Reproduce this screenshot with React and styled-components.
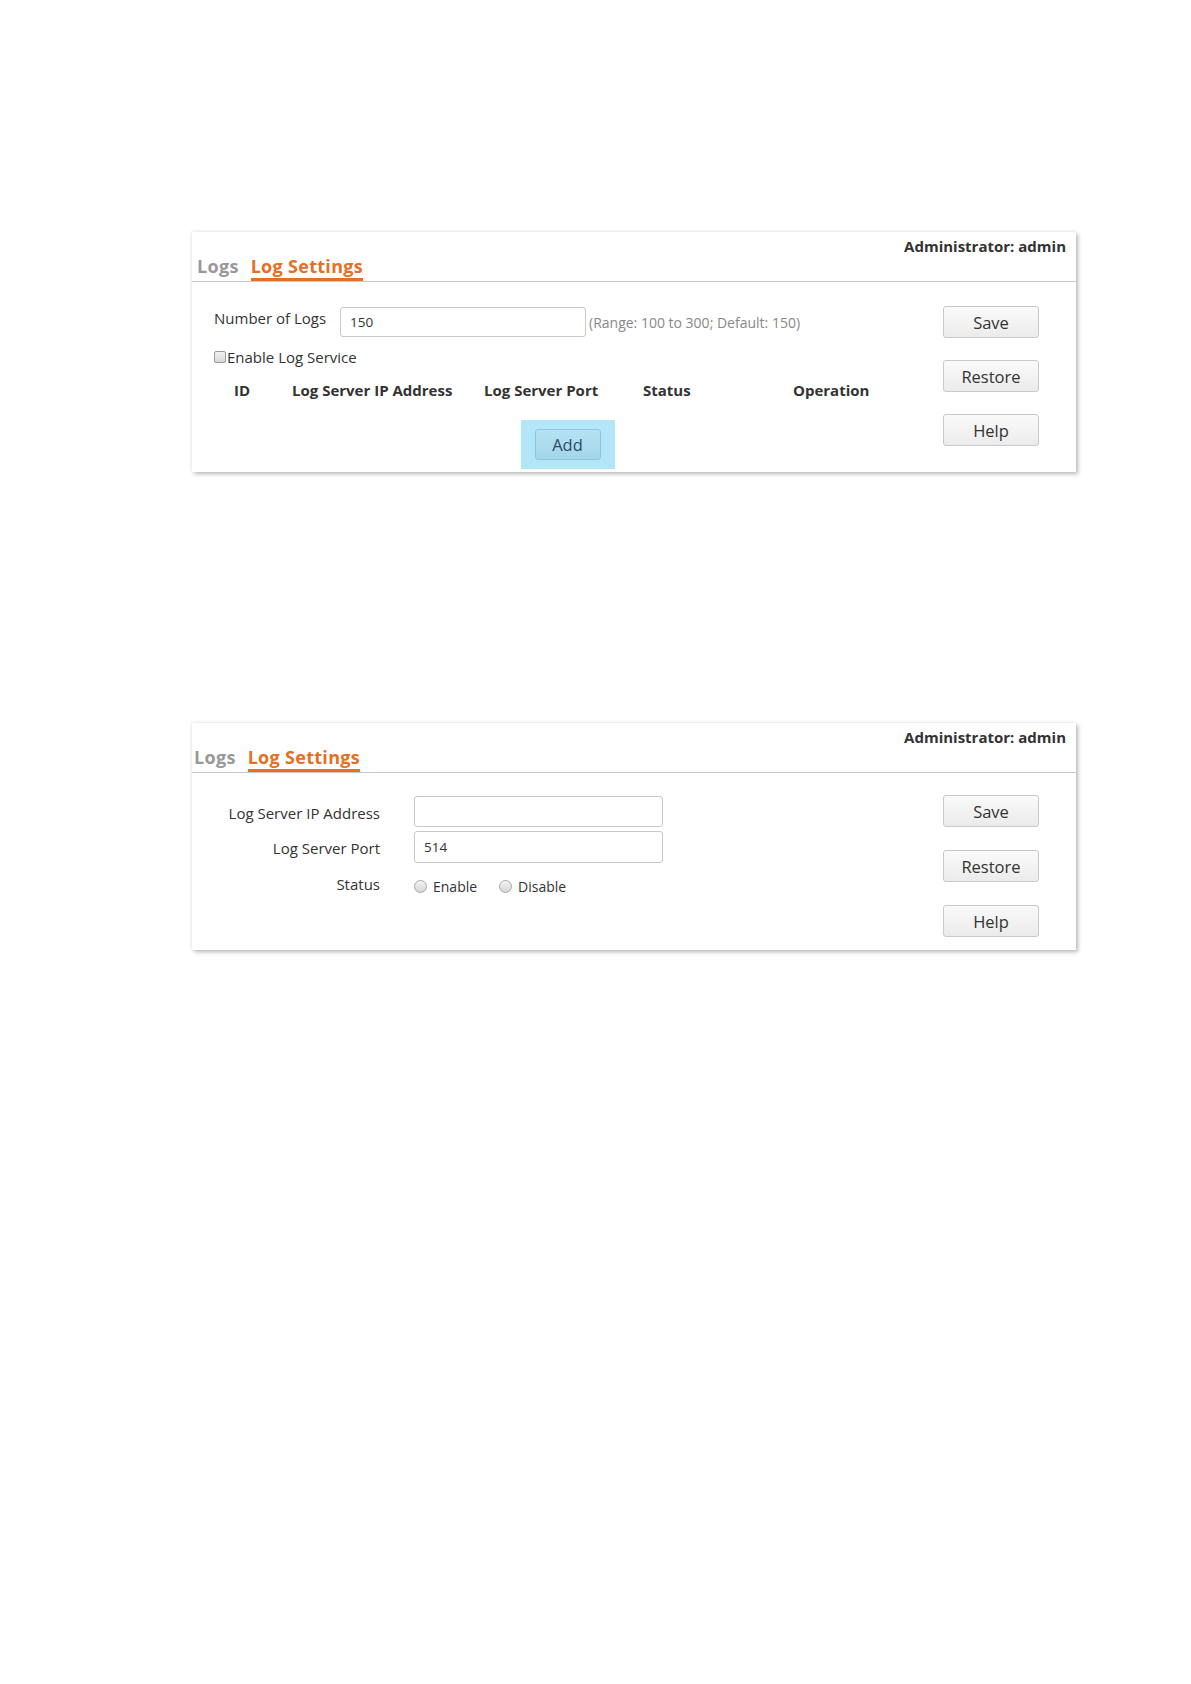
import styled, { createGlobalStyle } from 'styled-components';

const GlobalStyle = createGlobalStyle`
  html, body {
    margin: 0;
    padding: 0;
    background: #fff;
  }
  body {
    font-family: 'Open Sans', 'Noto Sans', sans-serif;
    color: #333;
  }
`;

const Page = styled.div`
  width: 1191px;
  min-height: 1684px;
  padding-top: 232px;
  box-sizing: border-box;
  display: flex;
  flex-direction: column;
  gap: 251px;
`;

const Panel = styled.div`
  margin-left: 192px;
  width: 884px;
  height: ${(p) => p.h}px;
  box-sizing: border-box;
  background: #fff;
  box-shadow: 2px 2px 4px rgba(0, 0, 0, 0.28), -1px -1px 3px rgba(0, 0, 0, 0.06);
  display: flex;
  flex-direction: column;
`;

const Header = styled.div`
  height: 49px;
  border-bottom: 1px solid #c8c8c8;
  display: flex;
  justify-content: space-between;
  padding: 0 10px 0 ${(p) => p.pl}px;
`;

const Tabs = styled.div`
  display: flex;
  align-items: flex-end;
  gap: 12px;
`;

const Tab = styled.div`
  font-size: 18px;
  font-weight: 700;
  letter-spacing: 0.3px;
  color: ${(p) => (p.active ? '#e56f24' : '#999')};
  padding-bottom: 0;
  border-bottom: 3px solid ${(p) => (p.active ? '#e56f24' : 'transparent')};
  line-height: 24px;
`;

const Admin = styled.div`
  font-size: 15px;
  font-weight: 700;
  color: #333;
  padding-top: 4px;
`;

const Body = styled.div`
  flex: 1;
  display: flex;
`;

const Content = styled.div`
  flex: 1;
  display: flex;
  flex-direction: column;
`;

const ButtonCol = styled.div`
  width: 96px;
  padding: ${(p) => p.pt}px 37px 0 0;
  display: flex;
  flex-direction: column;
  gap: ${(p) => p.gap}px;
`;

const Button = styled.button`
  height: 32px;
  width: 96px;
  border: 1px solid #c9c9c9;
  border-radius: 3px;
  background: linear-gradient(#fafafa, #ebebeb);
  font-family: inherit;
  font-size: 16.5px;
  color: #333;
  padding: 0;
`;

const Row = styled.div`
  display: flex;
  align-items: center;
  height: ${(p) => p.h}px;
  margin-top: ${(p) => p.mt || 0}px;
  padding-left: ${(p) => p.pl || 0}px;
`;

const Label = styled.span`
  font-size: 15px;
  color: #333;
  width: ${(p) => (p.w ? `${p.w}px` : 'auto')};
  margin-top: ${(p) => p.mt || 0}px;
`;

const TextInput = styled.div`
  width: ${(p) => p.w}px;
  height: ${(p) => p.h}px;
  box-sizing: border-box;
  border: 1px solid #c8c8c8;
  border-radius: 3px;
  display: flex;
  align-items: center;
  padding-left: 9px;
  font-size: 13.5px;
  color: #333;
`;

const Hint = styled.span`
  font-size: 14px;
  color: #888;
  margin-left: 3px;
`;

const Check = styled.span`
  width: 12px;
  height: 12px;
  box-sizing: border-box;
  border: 1px solid #999;
  border-radius: 2px;
  background: linear-gradient(#f2f2f2, #d8d8d8);
  margin-right: 1px;
`;

const TableHead = styled.div`
  display: flex;
  height: 24px;
  align-items: center;
  padding-left: 42px;
  margin-top: 10px;
`;

const Th = styled.span`
  width: ${(p) => p.w}px;
  font-size: 15px;
  font-weight: 700;
  color: #333;
  white-space: nowrap;
`;

const AddWrap = styled.div`
  display: flex;
  justify-content: center;
  margin-top: 18px;
`;

const Highlight = styled.div`
  width: 94px;
  height: 49px;
  background: #b3e6f8;
  display: flex;
  align-items: center;
  justify-content: center;
`;

const AddButton = styled.button`
  width: 66px;
  height: 31px;
  border: 1px solid #8fc6dc;
  border-radius: 3px;
  background: linear-gradient(#b5e2f3, #a3d6ea);
  font-family: inherit;
  font-size: 16.5px;
  color: #2a4a66;
  padding: 0;
`;

const FormGrid = styled.div`
  display: grid;
  grid-template-columns: 188px 249px;
  column-gap: 34px;
  row-gap: 4px;
  margin-top: 23px;
  align-items: center;
`;

const FormLabel = styled.span`
  text-align: right;
  font-size: 15px;
  color: #333;
  margin-top: ${(p) => p.mt || 0}px;
`;

const Radios = styled.div`
  display: flex;
  align-items: center;
  gap: 22px;
  padding-top: 10px;
`;

const RadioItem = styled.label`
  display: flex;
  align-items: center;
  gap: 6px;
  font-size: 14px;
  color: #333;
`;

const RadioDot = styled.span`
  width: 13px;
  height: 13px;
  box-sizing: border-box;
  border-radius: 50%;
  border: 1px solid #a8a8a8;
  background: linear-gradient(#f4f4f4, #d6d6d6);
`;

const PanelHeader = ({ pl }) => (
  <Header pl={pl}>
    <Tabs>
      <Tab>Logs</Tab>
      <Tab active>Log Settings</Tab>
    </Tabs>
    <Admin>Administrator: admin</Admin>
  </Header>
);

const App = () => {
  return (
    <>
      <GlobalStyle />
      <Page>
        <Panel h={240}>
          <PanelHeader pl={5} />
          <Body>
            <Content>
              <Row h={30} mt={25} pl={22}>
                <Label w={126} mt={-8}>Number of Logs</Label>
                <TextInput w={246} h={30}>150</TextInput>
                <Hint>(Range: 100 to 300; Default: 150)</Hint>
              </Row>
              <Row h={22} mt={9} pl={22}>
                <Check />
                <Label>Enable Log Service</Label>
              </Row>
              <TableHead>
                <Th w={58}>ID</Th>
                <Th w={192}>Log Server IP Address</Th>
                <Th w={159}>Log Server Port</Th>
                <Th w={150}>Status</Th>
                <Th w={100}>Operation</Th>
              </TableHead>
              <AddWrap>
                <Highlight>
                  <AddButton>Add</AddButton>
                </Highlight>
              </AddWrap>
            </Content>
            <ButtonCol pt={24} gap={22}>
              <Button>Save</Button>
              <Button>Restore</Button>
              <Button>Help</Button>
            </ButtonCol>
          </Body>
        </Panel>

        <Panel h={227}>
          <PanelHeader pl={2} />
          <Body>
            <Content>
              <FormGrid>
                <FormLabel mt={2}>Log Server IP Address</FormLabel>
                <TextInput w={249} h={31} />
                <FormLabel mt={2}>Log Server Port</FormLabel>
                <TextInput w={249} h={32}>514</TextInput>
                <FormLabel mt={4}>Status</FormLabel>
                <Radios>
                  <RadioItem>
                    <RadioDot />
                    Enable
                  </RadioItem>
                  <RadioItem>
                    <RadioDot />
                    Disable
                  </RadioItem>
                </Radios>
              </FormGrid>
            </Content>
            <ButtonCol pt={22} gap={23}>
              <Button>Save</Button>
              <Button>Restore</Button>
              <Button>Help</Button>
            </ButtonCol>
          </Body>
        </Panel>
      </Page>
    </>
  );
};

export default App;
